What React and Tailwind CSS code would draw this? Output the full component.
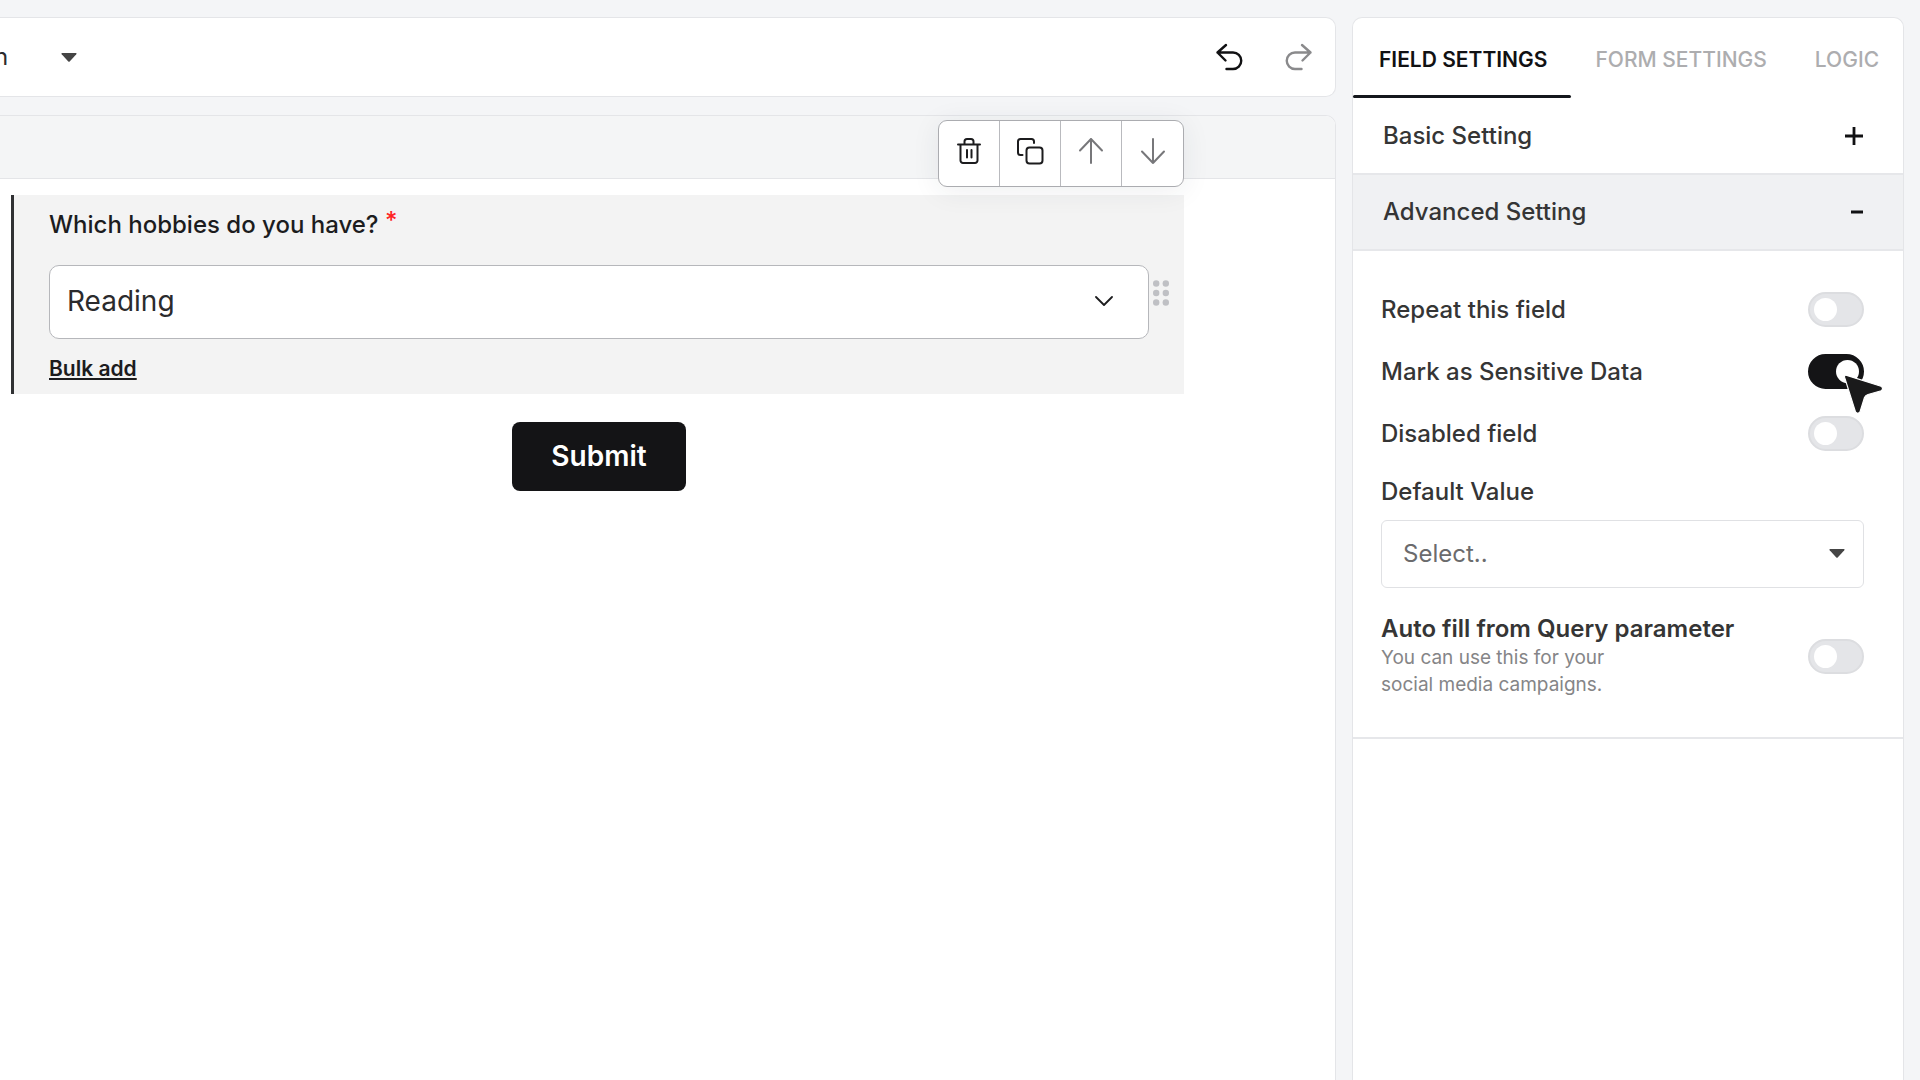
import React, { useState } from 'react';

function Caret({ className }) {
    return (
        <svg viewBox="0 0 16 9" className={`w-4 h-[9px] pointer-events-none ${className}`} fill="#454545">
            <path d="M1 0h14q1 .4.3 1.200L8.700 8.500q-.7.6-1.400 0L.7 1.200Q0 .4 1 0Z" />
        </svg>
    );
}

function TrashIcon() {
    return (
        <svg viewBox="0 0 26 28" className="w-[26px] h-7" fill="none" stroke="#1c1c1e" strokeWidth="2" strokeLinecap="round" strokeLinejoin="round">
            <path d="M2 7.500h22M4.500 7.500v16a2.500 2.500 0 0 0 2.500 2.500h12a2.500 2.500 0 0 0 2.500-2.500v-16" />
            <path d="M8.500 7V4.500A2.500 2.500 0 0 1 11 2h4a2.500 2.500 0 0 1 2.500 2.500V7M11 13v7.500M15.500 13v7.500" />
        </svg>
    );
}

function CopyIcon() {
    return (
        <svg viewBox="0 0 28 28" className="w-7 h-7" fill="none" stroke="#1c1c1e" strokeWidth="2" strokeLinecap="round" strokeLinejoin="round">
            <rect x="10.500" y="10.500" width="16" height="16" rx="3" />
            <path d="M6.500 18H4.500a2.500 2.500 0 0 1-2.500-2.500V4.500A2.500 2.500 0 0 1 4.500 2h11a2.500 2.500 0 0 1 2.500 2.500v1.500" />
        </svg>
    );
}

function ArrowIcon({ down }) {
    return (
        <svg viewBox="0 0 26 28" className={`w-[26px] h-7 ${down ? 'rotate-180' : ''}`} fill="none" stroke="#77777a" strokeWidth="2" strokeLinecap="round" strokeLinejoin="round">
            <path d="M13 26V2M2 13.500 13 2l11 11.500" />
        </svg>
    );
}

function UndoIcon({ className }) {
    return (
        <svg viewBox="0 0 28 28" className={`w-7 h-7 ${className}`} fill="none" stroke="currentColor" strokeWidth="2.400" strokeLinecap="round" strokeLinejoin="round">
            <path d="M11 2 2.500 9.500l8 8M2.500 9.500h15.500a8.250 8.250 0 0 1 0 16.500H11.500" />
        </svg>
    );
}

function DragDots() {
    return (
        <svg viewBox="0 0 16 26" className="w-4 h-[26px]" fill="#bfc0c4">
            {[3.2, 12.8].map((x) => [3.5, 13, 22.5].map((y) => <circle key={`${x}-${y}`} cx={x} cy={y} r="3.200" />))}
        </svg>
    );
}

function CursorIcon() {
    return (
        <svg viewBox="0 0 40 42" className="absolute left-9 top-5 z-10 w-10 h-[42px] pointer-events-none">
            <path
                d="M.6 3.400Q0 .6 2.800 1.400L37 12.300Q40 14.300 37.200 16.800L24 20.500Q21.500 21.200 20.500 23.500L16 38Q13.800 40.700 11.500 38Z"
                fill="#1a1a1b"
                stroke="white"
                strokeWidth="1.200"
            />
        </svg>
    );
}

const toolbar = [
    { label: 'Delete', icon: <TrashIcon /> },
    { label: 'Duplicate', icon: <CopyIcon /> },
    { label: 'Move up', icon: <ArrowIcon /> },
    { label: 'Move down', icon: <ArrowIcon down /> },
];

const tabs = ['FIELD SETTINGS', 'FORM SETTINGS', 'LOGIC'];

function Toggle({ id, checked, onChange }) {
    return (
        <input
            id={id}
            type="checkbox"
            checked={checked}
            onChange={onChange}
            className="block appearance-none shrink-0 w-14 h-[35px] rounded-full border-2 border-[#dcdde0] bg-[#e4e5e8] cursor-pointer before:block before:w-[23px] before:h-[23px] before:mt-1 before:ml-1 before:rounded-full before:bg-white checked:bg-[#141416] checked:border-[#141416] checked:before:ml-[26px]"
        />
    );
}

function FieldCard() {
    return (
        <div className="relative mt-4 ml-[11px] mr-[151px] border-l-3 border-[#303133] bg-[#f3f3f3] pl-[35px] pr-[15px] pt-[14px] pb-[11px]">
            <div className="absolute right-0 -top-[75px] flex h-[67px] bg-white border border-[#abacb0] rounded-[9px] shadow-[0_4px_28px_rgba(40,50,70,0.08)] divide-x divide-[#b9babe]">
                {toolbar.map((t) => (
                    <button key={t.label} type="button" aria-label={t.label} className="flex w-[61px] items-center justify-center pb-[6px]">
                        {t.icon}
                    </button>
                ))}
            </div>

            <label htmlFor="hobby" className="block text-2xl font-medium text-[#1c1c1e]">
                Which hobbies do you have? <span className="relative -top-1 text-[#ff2424]">*</span>
            </label>
            <div className="flex mt-6">
                <div className="relative flex-1">
                    <select id="hobby" className="block appearance-none w-full h-[74px] rounded-[10px] border border-[#b6b7bb] bg-white px-[17px] pb-[2px] text-[28px] text-[#2b2b2d]">
                        <option>Reading</option>
                    </select>
                    <svg viewBox="0 0 18 10" className="absolute right-[36px] top-[31px] w-[18px] h-[10px] pointer-events-none" fill="none" stroke="#1c1c1e" strokeWidth="1.800" strokeLinecap="round" strokeLinejoin="round">
                        <path d="M1 1l8 8 8-8" />
                    </svg>
                </div>
                <button type="button" aria-label="Drag" className="ml-1 self-start pt-[15px]">
                    <DragDots />
                </button>
            </div>
            <a href="#bulk" className="block w-fit mt-4 text-[21px] leading-7 font-semibold text-[#1c1c1e] underline decoration-2 underline-offset-2">
                Bulk add
            </a>
        </div>
    );
}

export default function App() {
    const [activeTab, setActiveTab] = useState('FIELD SETTINGS');
    const [settings, setSettings] = useState({ repeat: false, sensitive: true, disabled: false, autofill: false });

    const flip = (key) => setSettings({ ...settings, [key]: !settings[key] });

    return (
        <div className="flex min-h-screen gap-4 overflow-hidden bg-[#f4f5f7] pt-[17px] pr-4 font-['Inter',sans-serif]">
            <main className="flex flex-1 flex-col gap-[18px]">
                <header className="flex h-20 items-center justify-between rounded-r-[10px] border border-l-0 border-[#e4e5e8] bg-white pr-[22px]">
                    <div className="relative -ml-[6px]">
                        <select aria-label="Page" className="block appearance-none w-[83px] text-2xl text-[#2b2b2d]">
                            <option>n</option>
                        </select>
                        <Caret className="absolute right-0 top-3" />
                    </div>
                    <div className="flex gap-[42px]">
                        <button type="button" aria-label="Undo" className="text-[#111113]">
                            <UndoIcon />
                        </button>
                        <button type="button" aria-label="Redo" className="text-[#8a8a8c]">
                            <UndoIcon className="-scale-x-100" />
                        </button>
                    </div>
                </header>

                <section className="flex-1 rounded-tr-[10px] border border-l-0 border-b-0 border-[#e4e5e8] bg-white">
                    <div className="h-[63px] rounded-tr-[9px] border-b border-[#e4e5e8] bg-[#f4f5f6]" />
                    <FieldCard />
                    <div className="mt-7 ml-[49px] mr-[186px] flex justify-center">
                        <button type="button" className="h-[69px] rounded-lg bg-[#141416] px-[39px] pb-[2px] text-[28px] font-semibold text-white">
                            Submit
                        </button>
                    </div>
                </section>
            </main>

            <aside className="w-[552px] shrink-0 rounded-t-[10px] border border-b-0 border-[#e4e5e8] bg-white text-2xl text-[#353535]">
                <nav role="tablist" className="flex h-20">
                    {tabs.map((tab) => (
                        <button
                            key={tab}
                            type="button"
                            role="tab"
                            aria-selected={activeTab === tab}
                            onClick={() => setActiveTab(tab)}
                            className={`relative px-6 pt-1 first:pl-[26px] text-[21px] whitespace-nowrap ${
                                activeTab === tab
                                ? 'font-semibold text-[#111113] after:absolute after:inset-x-0 after:bottom-0 after:h-[3px] after:rounded-full after:bg-[#14171c]'
                                : 'font-medium text-[#adadaf]'
                            }`}
                        >
                            {tab}
                        </button>
                    ))}
                </nav>

                <button type="button" className="flex h-[75px] w-full items-center justify-between pl-[30px] pr-10 font-medium">
                    Basic Setting
                    <svg viewBox="0 0 18 18" className="w-[18px] h-[18px]" stroke="#111113" strokeWidth="2.800">
                        <path d="M9 0v18M0 9h18" />
                    </svg>
                </button>
                <button type="button" className="flex h-[78px] w-full items-center justify-between border-y-2 border-[#e6e7ea] bg-[#f0f1f3] pl-[30px] pr-10 font-medium">
                    Advanced Setting
                    <svg viewBox="0 0 12 4" className="w-3 h-1" stroke="#111113" strokeWidth="3">
                        <path d="M0 2h12" />
                    </svg>
                </button>

                <div className="border-b-2 border-[#e6e7ea] pt-[41px] pb-[39px] pl-7 pr-[39px]">
                    <div className="flex flex-col gap-[27px] font-medium">
                        <div className="flex items-center justify-between">
                            <label htmlFor="repeat">Repeat this field</label>
                            <Toggle id="repeat" checked={settings.repeat} onChange={() => flip('repeat')} />
                        </div>
                        <div className="flex items-center justify-between">
                            <label htmlFor="sensitive">Mark as Sensitive Data</label>
                            <div className="relative">
                                <Toggle id="sensitive" checked={settings.sensitive} onChange={() => flip('sensitive')} />
                                <CursorIcon />
                            </div>
                        </div>
                        <div className="flex items-center justify-between">
                            <label htmlFor="disabled">Disabled field</label>
                            <Toggle id="disabled" checked={settings.disabled} onChange={() => flip('disabled')} />
                        </div>
                    </div>

                    <label htmlFor="default-value" className="mt-[25px] block font-medium">Default Value</label>
                    <div className="relative mt-3">
                        <select id="default-value" className="block appearance-none h-[68px] w-full rounded-md border border-[#e0e1e4] bg-white px-[21px] text-[#6b6b6d]">
                            <option>Select..</option>
                        </select>
                        <Caret className="absolute right-[19px] top-[29px]" />
                    </div>

                    <div className="mt-[26px] flex items-center justify-between">
                        <div>
                            <label htmlFor="autofill" className="block leading-[30px] font-semibold">Auto fill from Query parameter</label>
                            <p className="text-[19px] leading-[27px] text-[#858587]">
                                You can use this for your
                                <br />
                                social media campaigns.
                            </p>
                        </div>
                        <Toggle id="autofill" checked={settings.autofill} onChange={() => flip('autofill')} />
                    </div>
                </div>
            </aside>
        </div>
    );
}
